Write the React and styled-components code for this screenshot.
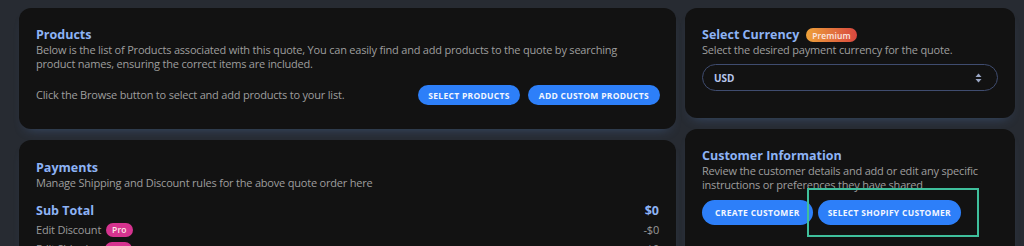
import React from 'react'
import styled, { createGlobalStyle } from 'styled-components'

const GlobalStyle = createGlobalStyle`
  html, body {
    margin: 0;
    padding: 0;
    background: #272b32;
  }
  body {
    font-family: "Open Sans", "Noto Sans", sans-serif;
    overflow: hidden;
  }
`

const Page = styled.div`
  display: grid;
  grid-template-columns: 657px 330px;
  column-gap: 9px;
  padding: 8px 10px 0 19px;
  height: 246px;
  box-sizing: border-box;
  overflow: hidden;
`

const Column = styled.div`
  display: flex;
  flex-direction: column;
  gap: 11px;
`

const Card = styled.section`
  position: relative;
  background: #121212;
  border-radius: 12px;
  padding: ${p => p.$pad || '19px 16px 0 17px'};
  height: ${p => p.$h ? `${p.$h}px` : 'auto'};
  min-height: ${p => p.$min ? `${p.$min}px` : '0'};
  box-sizing: border-box;
  box-shadow: 0 7px 12px -7px rgba(80, 120, 180, 0.45);
`

const TitleRow = styled.div`
  display: flex;
  align-items: center;
  gap: 7px;
`

const Title = styled.h2`
  margin: 0;
  font-size: 12.5px;
  line-height: 16px;
  font-weight: 700;
  color: #8db3f5;
`

const Text = styled.p`
  margin: 0;
  font-size: 11px;
  line-height: 14px;
  color: #9e9e9e;
  letter-spacing: -0.2px;
`

const ActionRow = styled.div`
  display: flex;
  align-items: center;
  justify-content: space-between;
  margin-top: 14px;
`

const Buttons = styled.div`
  display: flex;
  gap: ${p => p.$gap || 8}px;
  margin-top: ${p => p.$mt || 0}px;
`

const Button = styled.button`
  border: none;
  background: #2d7ff9;
  color: #f2f6ff;
  font-family: inherit;
  font-size: ${p => p.$fs || 8.5}px;
  font-weight: 700;
  letter-spacing: 0.3px;
  text-transform: uppercase;
  height: ${p => p.$h || 20}px;
  padding: 0 ${p => p.$px || 10}px;
  border-radius: 999px;
  cursor: pointer;
`

const Badge = styled.span`
  display: inline-flex;
  align-items: center;
  height: ${p => p.$h || 14}px;
  padding: 0 6px;
  border-radius: 999px;
  font-size: 8.5px;
  font-weight: 600;
  letter-spacing: 0.1px;
  color: #fbe9e4;
  background: ${p => p.$tone === 'pro'
    ? '#d6338f'
    : 'linear-gradient(90deg, #eea23a 0%, #d9473f 100%)'};
`

const Select = styled.div`
  display: flex;
  align-items: center;
  justify-content: space-between;
  height: 27px;
  margin-top: 7px;
  padding: 0 15px 0 11px;
  border: 1px solid #3f4c6f;
  border-radius: 999px;
  box-sizing: border-box;
`

const SelectValue = styled.span`
  font-size: 10px;
  font-weight: 700;
  color: #b7c6ec;
`

const SumRow = styled.div`
  display: flex;
  align-items: center;
  justify-content: space-between;
  margin-top: ${p => p.$mt || 0}px;
  height: ${p => p.$h || 19}px;
`

const SumLabel = styled.span`
  display: inline-flex;
  align-items: center;
  gap: 5px;
  font-size: ${p => p.$strong ? 12.5 : 11}px;
  font-weight: ${p => p.$strong ? 700 : 400};
  letter-spacing: ${p => p.$strong ? 0 : -0.2}px;
  color: ${p => p.$strong ? '#8db3f5' : '#9a9a9a'};
`

const Highlight = styled.div`
  position: absolute;
  left: 122px;
  top: 59px;
  width: 172px;
  height: 49px;
  border: 2px solid #3fbf9c;
  box-sizing: border-box;
  pointer-events: none;
`

const SortIcon = () => (
  <svg width="7" height="10" viewBox="0 0 7 10" fill="#9aa6c4">
    <path d="M3.5 0.5 L6.5 4 L0.5 4 Z" />
    <path d="M3.5 9.5 L6.5 6 L0.5 6 Z" />
  </svg>
)

export default function App() {
  return (
    <>
      <GlobalStyle />
      <Page>
        <Column>
          <Card $h={121}>
            <Title>Products</Title>
            <Text>
              Below is the list of Products associated with this quote, You can easily find and add products to the quote by searching
              <br />product names, ensuring the correct items are included.
            </Text>
            <ActionRow>
              <Text>Click the Browse button to select and add products to your list.</Text>
              <Buttons>
                <Button $px={10}>Select Products</Button>
                <Button $px={11}>Add Custom Products</Button>
              </Buttons>
            </ActionRow>
          </Card>
          <Card $min={140} $pad="20px 17px 0 17px">
            <Title>Payments</Title>
            <Text>Manage Shipping and Discount rules for the above quote order here</Text>
            <SumRow $mt={11}>
              <SumLabel $strong>Sub Total</SumLabel>
              <SumLabel $strong>$0</SumLabel>
            </SumRow>
            <SumRow>
              <SumLabel>Edit Discount <Badge $tone="pro">Pro</Badge></SumLabel>
              <SumLabel>-$0</SumLabel>
            </SumRow>
            <SumRow>
              <SumLabel>Edit Shipping <Badge $tone="pro">Pro</Badge></SumLabel>
              <SumLabel>$0</SumLabel>
            </SumRow>
          </Card>
        </Column>
        <Column>
          <Card $h={110} $pad="19px 17px 0 17px">
            <TitleRow>
              <Title>Select Currency</Title>
              <Badge>Premium</Badge>
            </TitleRow>
            <Text>Select the desired payment currency for the quote.</Text>
            <Select>
              <SelectValue>USD</SelectValue>
              <SortIcon />
            </Select>
          </Card>
          <Card $min={140} $pad="19px 17px 0 17px">
            <Title>Customer Information</Title>
            <Text>
              Review the customer details and add or edit any specific
              <br />instructions or preferences they have shared
            </Text>
            <Buttons $gap={5} $mt={8}>
              <Button $h={25} $px={13}>Create Customer</Button>
              <Button $h={25} $px={10}>Select Shopify Customer</Button>
            </Buttons>
            <Highlight />
          </Card>
        </Column>
      </Page>
    </>
  )
}
